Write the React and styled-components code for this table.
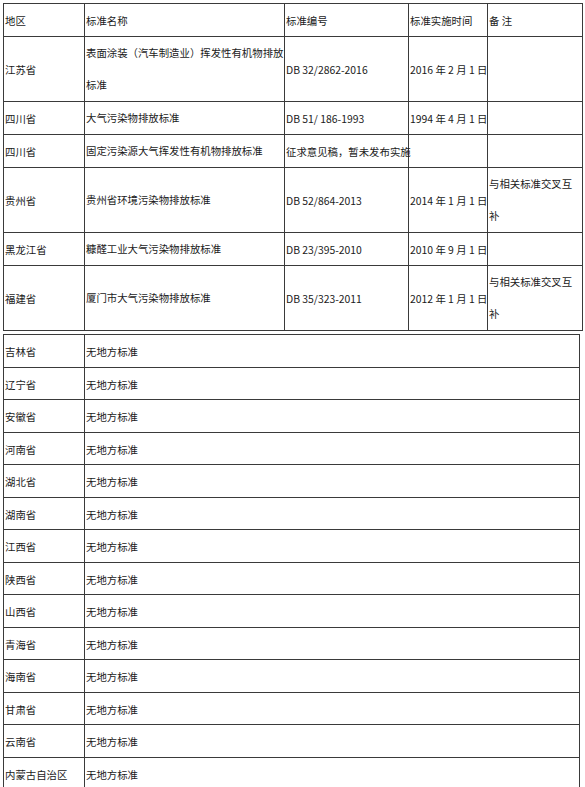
import { Fragment } from "react";
import styled, { createGlobalStyle } from "styled-components";

const GlobalStyle = createGlobalStyle`
  body {
    margin: 0;
    background: #fff;
  }
`;

const NOTE = ["与相关标准交叉互", "补"];

const standards = [
  { region: "江苏省", name: ["表面涂装（汽车制造业）挥发性有机物排放", "标准"], code: "DB 32/2862-2016", date: "2016 年 2 月 1 日", note: [] },
  { region: "四川省", name: ["大气污染物排放标准"], code: "DB 51/ 186-1993", date: "1994 年 4 月 1 日", note: [] },
  { region: "四川省", name: ["固定污染源大气挥发性有机物排放标准"], code: "征求意见稿，暂未发布实施", date: "", note: [] },
  { region: "贵州省", name: ["贵州省环境污染物排放标准"], code: "DB 52/864-2013", date: "2014 年 1 月 1 日", note: NOTE },
  { region: "黑龙江省", name: ["糠醛工业大气污染物排放标准"], code: "DB 23/395-2010", date: "2010 年 9 月 1 日", note: [] },
  { region: "福建省", name: ["厦门市大气污染物排放标准"], code: "DB 35/323-2011", date: "2012 年 1 月 1 日", note: NOTE },
];

const noStandard = [
  "吉林省", "辽宁省", "安徽省", "河南省", "湖北省", "湖南省", "江西省",
  "陕西省", "山西省", "青海省", "海南省", "甘肃省", "云南省", "内蒙古自治区",
];

const Page = styled.div`
  padding: 3px 0 0 3px;
  font-family: "Noto Sans CJK SC", "Noto Sans", sans-serif;
  font-size: 10.4px;
  color: #1a1a1a;
`;

const Grid = styled.div`
  display: grid;
  grid-template-columns: ${(p) => p.$cols};
  width: max-content;
  border-top: 1px solid #3a3a3a;
  border-left: 1px solid #3a3a3a;
  margin-bottom: ${(p) => p.$gap || 0}px;
`;

const Cell = styled.div`
  border-right: 1px solid #3a3a3a;
  border-bottom: 1px solid #3a3a3a;
  padding: 2px 0 0 1px;
  line-height: ${(p) => p.$lh || 30}px;
  display: flex;
  align-items: center;
  white-space: nowrap;
  overflow: visible;
`;

const Lines = styled.span`
  display: block;
  line-height: 32px;
  margin-top: -2px;
`;

const MultiLine = ({ lines }) => (
  <Lines>
    {lines.map((l, i) => (
      <Fragment key={i}>
        {i > 0 && <br />}
        {l}
      </Fragment>
    ))}
  </Lines>
);

export default function App() {
  return (
    <Page>
      <GlobalStyle />
      <Grid $cols="81px 200px 124px 79px 95px" $gap={3}>
        <Cell>地区</Cell>
        <Cell>标准名称</Cell>
        <Cell>标准编号</Cell>
        <Cell>标准实施时间</Cell>
        <Cell>备&nbsp;注</Cell>
        {standards.map((s, i) => [
          <Cell key={i + "r"}>{s.region}</Cell>,
          <Cell key={i + "n"}><MultiLine lines={s.name} /></Cell>,
          <Cell key={i + "c"}>{s.code}</Cell>,
          <Cell key={i + "d"}>{s.date}</Cell>,
          <Cell key={i + "o"}><MultiLine lines={s.note} /></Cell>,
        ])}
      </Grid>
      <Grid $cols="81px 495px">
        {noStandard.map((r) => [
          <Cell key={r + "r"} $lh={29.5}>{r}</Cell>,
          <Cell key={r + "n"} $lh={29.5}>无地方标准</Cell>,
        ])}
      </Grid>
    </Page>
  );
}
